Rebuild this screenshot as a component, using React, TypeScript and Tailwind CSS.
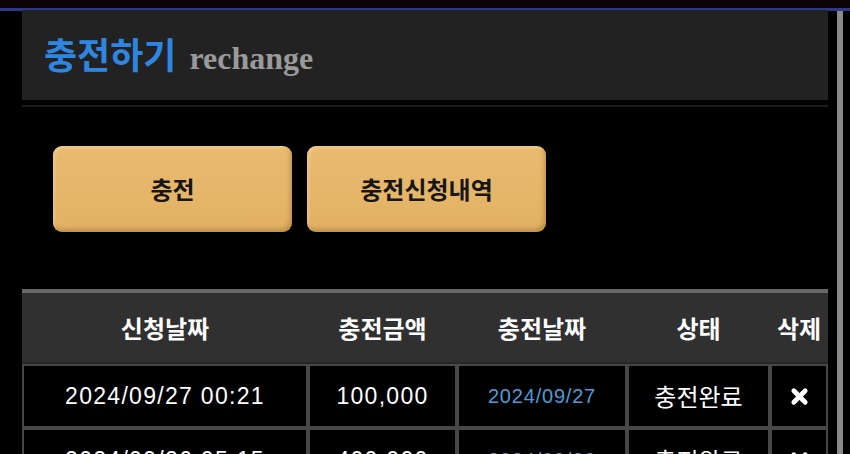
import { Fragment } from 'react';

const rows = [
  { applied: '2024/09/27 00:21', amount: '100,000', charged: '2024/09/27', status: '충전완료' },
  { applied: '2024/09/26 05:15', amount: '400,000', charged: '2024/09/26', status: '충전완료' },
];

const cols = ['신청날짜', '충전금액', '충전날짜', '상태', '삭제'];
const widths = ['w-[286px]', 'w-[149px]', 'w-[170px]', 'w-[143px]', 'w-[58px]'];

function DeleteIcon() {
  return (
    <svg width="19" height="19" viewBox="0 0 20 20" className="mx-auto">
      <path d="M4 4 L16 16 M16 4 L4 16" stroke="#fff" strokeWidth="5" strokeLinecap="round" />
    </svg>
  );
}

export default function App() {
  const ko = "font-['Noto_Sans_CJK_KR','Noto_Sans',sans-serif]";
  const latin = "font-['Liberation_Sans','Noto_Sans_CJK_KR',sans-serif]";

  return (
    <div className="w-[850px] h-[454px] overflow-hidden bg-black">
      {/* top strip */}
      <div className="h-2 bg-[#0b0305]" />
      <div className="h-[3px] bg-[#2a3988]" />

      <div className="flex">
        <main className="w-[806px] ml-[22px] flex flex-col">
          {/* Title bar */}
          <section className="h-[90px] bg-[#222222] flex items-center pl-[22px] -mt-px">
            <div className="flex items-baseline mb-[2px]">
              <h1 className={`${ko} text-[36px] font-bold text-[#2f86e0] leading-none`}>충전하기</h1>
              <span className="ml-[13px] font-['Liberation_Serif',serif] font-bold text-[32px] text-[#9a9a9a] leading-none">
                rechange
              </span>
            </div>
          </section>
          <div className="mt-[5px] h-[2px] bg-[#1c1c1c]" />

          {/* Actions */}
          <div className="flex gap-[15px] pl-[31px] pt-[39px]">
            {['충전', '충전신청내역'].map((label) => (
              <button
                key={label}
                className={`${ko} w-[239px] h-[86px] rounded-[9px] bg-gradient-to-b from-[#e9bb6f] to-[#e2b163] text-[24px] font-bold text-[#161616] shadow-[inset_-2px_-3px_4px_rgba(120,80,20,0.35),inset_2px_2px_3px_rgba(255,240,200,0.35)]`}
              >
                {label}
              </button>
            ))}
          </div>

          {/* History table */}
          <table className="mt-[57px] table-fixed border-separate border-spacing-0 w-[806px]">
            <thead>
              <tr>
                {cols.map((c, i) => (
                  <th
                    key={c}
                    className={`${ko} ${widths[i]} h-[75px] bg-[#303031] border-t-4 border-t-[#686868] border-b-2 border-b-[#262626] text-[24px] font-bold text-white`}
                  >
                    {c}
                  </th>
                ))}
              </tr>
            </thead>
            <tbody>
              {rows.map((r) => (
                <Fragment key={r.applied}>
                  <tr>
                    <td className={`${latin} h-[64px] border-2 border-[#474747] text-center text-white text-[23px] tracking-[1.3px]`}>
                      {r.applied}
                    </td>
                    <td className={`${latin} border-2 border-[#474747] text-center text-white text-[23px] tracking-[1.3px]`}>
                      {r.amount}
                    </td>
                    <td className={`${latin} border-2 border-[#474747] text-center text-[#4f9bd8] text-[20px] tracking-[0.8px]`}>
                      {r.charged}
                    </td>
                    <td className={`${ko} border-2 border-[#474747] text-center text-white text-[24px]`}>{r.status}</td>
                    <td className="border-2 border-[#474747] text-center">
                      <DeleteIcon />
                    </td>
                  </tr>
                </Fragment>
              ))}
            </tbody>
          </table>
        </main>

        {/* scrollbar */}
        <div className="ml-[9px] w-[6px] bg-[#8a8a8a]" />
      </div>
    </div>
  );
}
